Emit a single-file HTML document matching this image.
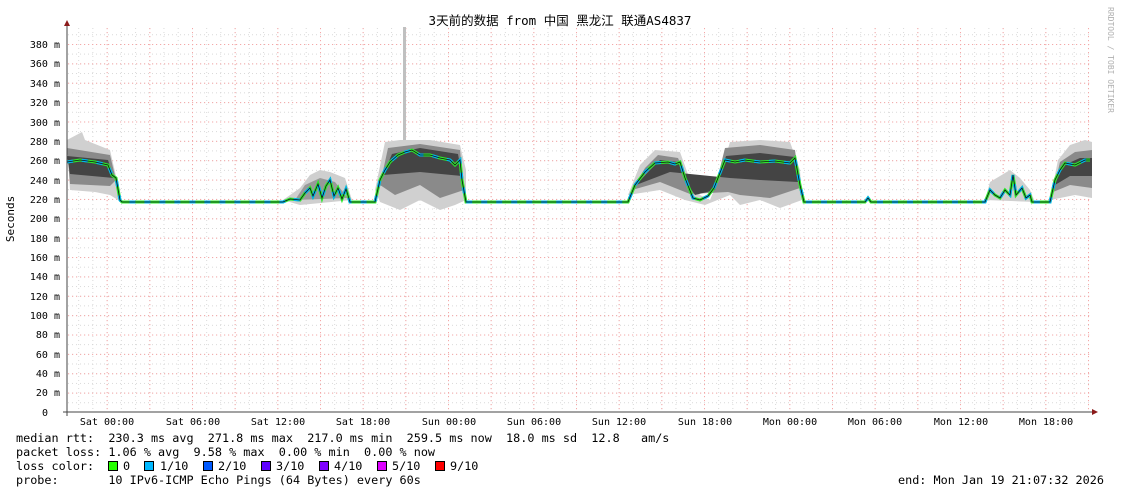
<!DOCTYPE html>
<html><head><meta charset="utf-8"><style>
body{margin:0;background:#fff;width:1121px;height:494px;overflow:hidden;position:relative;font-family:"DejaVu Sans Mono","Liberation Mono",monospace;}
.t{position:absolute;white-space:pre;font-size:11.8px;color:#000;}
.sq{position:absolute;top:461px;width:8px;height:8px;border:1px solid #000}
</style></head><body>
<svg width="1121" height="494" style="position:absolute;left:0;top:0" font-family="DejaVu Sans Mono, Liberation Mono, monospace">
<defs>
<pattern id="mv" patternUnits="userSpaceOnUse" x="106.67" y="0" width="14.222" height="4"><rect x="0" y="0" width="0.8" height="1" fill="#d0d0d0"/></pattern>
<pattern id="mh" patternUnits="userSpaceOnUse" x="0" y="412" width="4" height="9.684"><rect x="0" y="0" width="1" height="0.8" fill="#d0d0d0"/></pattern>
<pattern id="Mv" patternUnits="userSpaceOnUse" x="106.67" y="0" width="42.667" height="4"><rect x="0" y="0" width="1" height="1.2" fill="#f4a8a8"/></pattern>
<pattern id="Mh" patternUnits="userSpaceOnUse" x="0" y="412" width="4" height="19.368"><rect x="0" y="0" width="1.2" height="1" fill="#f4a8a8"/></pattern>
</defs>
<rect x="68" y="26" width="1024" height="386" fill="url(#mv)"/>
<rect x="68" y="26" width="1024" height="386" fill="url(#mh)"/>
<rect x="68" y="26" width="1024" height="386" fill="url(#Mv)"/>
<rect x="68" y="26" width="1024" height="386" fill="url(#Mh)"/>
<g>
<rect x="403" y="27" width="3" height="150" fill="#c0c0c0"/>
<polygon fill="#d0d0d0" points="67,140 82,132 85,140 110,150 118,185 118,200 110,195 95,192 70,190"/>
<polygon fill="#8a8a8a" points="67,148 110,155 116,180 110,186 70,184"/>
<polygon fill="#444" points="67,156 108,160 114,178 70,174"/>
<polygon fill="#cfcfcf" points="283,200 300,188 310,175 320,170 330,172 345,178 352,200 300,205"/>
<polygon fill="#999" points="295,200 305,185 320,178 335,182 348,198"/>
<polygon fill="#d0d0d0" points="375,190 385,142 400,140 430,140 460,145 466,170 466,200 455,205 440,210 420,200 400,210 380,202"/>
<polygon fill="#8a8a8a" points="380,185 388,148 420,144 460,150 464,190 440,198 420,185 395,195"/>
<polygon fill="#444" points="383,175 392,154 420,148 458,154 462,176 420,172"/>
<polygon fill="#d0d0d0" points="628,195 640,165 655,150 680,152 690,180 700,195 710,200 720,175 730,142 760,140 790,142 800,170 802,200 780,208 760,200 740,205 730,195 705,205 685,200 660,190"/>
<polygon fill="#8a8a8a" points="632,190 645,168 658,155 678,158 690,185 700,190 715,188 725,148 760,145 795,150 800,188 770,198 740,195 728,192 690,194 660,182"/>
<polygon fill="#444" points="636,185 650,170 660,160 678,162 688,185 695,195 715,190 726,156 760,153 795,157 798,182 760,180 730,178 670,172"/>
<polygon fill="#d0d0d0" points="985,200 990,182 1010,170 1020,178 1030,190 1035,202"/>
<polygon fill="#d0d0d0" points="1050,200 1058,160 1070,145 1085,140 1092,142 1092,198 1075,195 1060,198"/>
<polygon fill="#8a8a8a" points="1053,192 1060,162 1075,152 1092,150 1092,188 1070,185"/>
<polygon fill="#444" points="1055,185 1062,166 1080,158 1092,158 1092,176 1070,176"/>
</g>
<g fill="none">
<polyline stroke="#2ee82e" stroke-width="3" points="67,162 80,160 95,162 108,165 112,175 116,178 120,200 122,202 283,202 290,199 300,200 305,193 310,188 313,196 318,184 322,198 326,186 330,180 334,196 338,188 342,199 346,189 350,202 375,202 380,180 385,170 390,162 398,155 405,152 412,150 420,155 430,155 440,158 450,160 455,165 460,160 462,180 466,202 628,202 635,185 645,172 655,163 668,162 675,164 680,162 685,178 693,198 700,200 708,196 714,188 718,178 725,160 735,162 745,160 760,162 775,161 790,163 795,158 800,185 804,202 865,202 868,198 871,202 985,202 990,190 995,195 1000,198 1005,190 1010,195 1013,175 1016,195 1022,188 1026,198 1030,195 1032,202 1050,202 1055,180 1060,170 1065,163 1075,165 1085,160 1090,160"/>
<polyline stroke="#00b4f0" stroke-width="3" stroke-dasharray="6 9" points="67,162 80,160 95,162 108,165 112,175 116,178 120,200 122,202 283,202 290,199 300,200 305,193 310,188 313,196 318,184 322,198 326,186 330,180 334,196 338,188 342,199 346,189 350,202 375,202 380,180 385,170 390,162 398,155 405,152 412,150 420,155 430,155 440,158 450,160 455,165 460,160 462,180 466,202 628,202 635,185 645,172 655,163 668,162 675,164 680,162 685,178 693,198 700,200 708,196 714,188 718,178 725,160 735,162 745,160 760,162 775,161 790,163 795,158 800,185 804,202 865,202 868,198 871,202 985,202 990,190 995,195 1000,198 1005,190 1010,195 1013,175 1016,195 1022,188 1026,198 1030,195 1032,202 1050,202 1055,180 1060,170 1065,163 1075,165 1085,160 1090,160"/>
<polyline stroke="#111" stroke-width="0.8" points="67,162 80,160 95,162 108,165 112,175 116,178 120,200 122,202 283,202 290,199 300,200 305,193 310,188 313,196 318,184 322,198 326,186 330,180 334,196 338,188 342,199 346,189 350,202 375,202 380,180 385,170 390,162 398,155 405,152 412,150 420,155 430,155 440,158 450,160 455,165 460,160 462,180 466,202 628,202 635,185 645,172 655,163 668,162 675,164 680,162 685,178 693,198 700,200 708,196 714,188 718,178 725,160 735,162 745,160 760,162 775,161 790,163 795,158 800,185 804,202 865,202 868,198 871,202 985,202 990,190 995,195 1000,198 1005,190 1010,195 1013,175 1016,195 1022,188 1026,198 1030,195 1032,202 1050,202 1055,180 1060,170 1065,163 1075,165 1085,160 1090,160"/>
</g>
<line x1="67" y1="26" x2="67" y2="416" stroke="#444"/>
<line x1="63" y1="412" x2="1094" y2="412" stroke="#444"/>
<polygon points="64,26 70,26 67,20" fill="#8b1a1a"/>
<polygon points="1092,409 1092,415 1098,412" fill="#8b1a1a"/>
<g font-size="10" fill="#000" text-anchor="end">
<text x="60" y="48">380 m</text><text x="60" y="67">360 m</text><text x="60" y="87">340 m</text><text x="60" y="106">320 m</text><text x="60" y="126">300 m</text><text x="60" y="145">280 m</text><text x="60" y="164">260 m</text><text x="60" y="184">240 m</text><text x="60" y="203">220 m</text><text x="60" y="222">200 m</text><text x="60" y="242">180 m</text><text x="60" y="261">160 m</text><text x="60" y="280">140 m</text><text x="60" y="300">120 m</text><text x="60" y="319">100 m</text><text x="60" y="338">80 m</text><text x="60" y="358">60 m</text><text x="60" y="377">40 m</text><text x="60" y="396">20 m</text><text x="48" y="416">0</text>
</g>
<g font-size="10" fill="#000" text-anchor="middle">
<text x="107" y="425">Sat 00:00</text><text x="193" y="425">Sat 06:00</text><text x="278" y="425">Sat 12:00</text><text x="363" y="425">Sat 18:00</text><text x="449" y="425">Sun 00:00</text><text x="534" y="425">Sun 06:00</text><text x="619" y="425">Sun 12:00</text><text x="705" y="425">Sun 18:00</text><text x="790" y="425">Mon 00:00</text><text x="875" y="425">Mon 06:00</text><text x="961" y="425">Mon 12:00</text><text x="1046" y="425">Mon 18:00</text>
</g>
<text x="14" y="219" font-size="11" text-anchor="middle" transform="rotate(-90 14 219)">Seconds</text>
<text x="1108" y="60" font-size="8" fill="#b0b0b0" text-anchor="middle" transform="rotate(90 1108 60)">RRDTOOL / TOBI OETIKER</text>
<text x="560" y="25" font-size="12.5" text-anchor="middle" font-family="DejaVu Sans Mono, Noto Sans CJK SC, sans-serif">3天前的数据 from 中国 黑龙江 联通AS4837</text>
</svg>
<div class="t" style="left:16px;top:431px">median rtt:  230.3 ms avg  271.8 ms max  217.0 ms min  259.5 ms now  18.0 ms sd  12.8   am/s</div>
<div class="t" style="left:16px;top:445px">packet loss: 1.06 % avg  9.58 % max  0.00 % min  0.00 % now</div>
<div class="t" style="left:16px;top:459px">loss color:</div>
<div class="sq" style="left:108px;background:#26ff00"></div><div class="t" style="left:123px;top:459px">0</div>
<div class="sq" style="left:144px;background:#00b8ff"></div><div class="t" style="left:160px;top:459px">1/10</div>
<div class="sq" style="left:203px;background:#0059ff"></div><div class="t" style="left:218px;top:459px">2/10</div>
<div class="sq" style="left:261px;background:#5e00ff"></div><div class="t" style="left:276px;top:459px">3/10</div>
<div class="sq" style="left:319px;background:#7e00ff"></div><div class="t" style="left:334px;top:459px">4/10</div>
<div class="sq" style="left:377px;background:#dd00ff"></div><div class="t" style="left:392px;top:459px">5/10</div>
<div class="sq" style="left:435px;background:#ff0000"></div><div class="t" style="left:450px;top:459px">9/10</div>
<div class="t" style="left:16px;top:473px">probe:       10 IPv6-ICMP Echo Pings (64 Bytes) every 60s</div>
<div class="t" style="left:898px;top:473px">end: Mon Jan 19 21:07:32 2026</div>
</body></html>
